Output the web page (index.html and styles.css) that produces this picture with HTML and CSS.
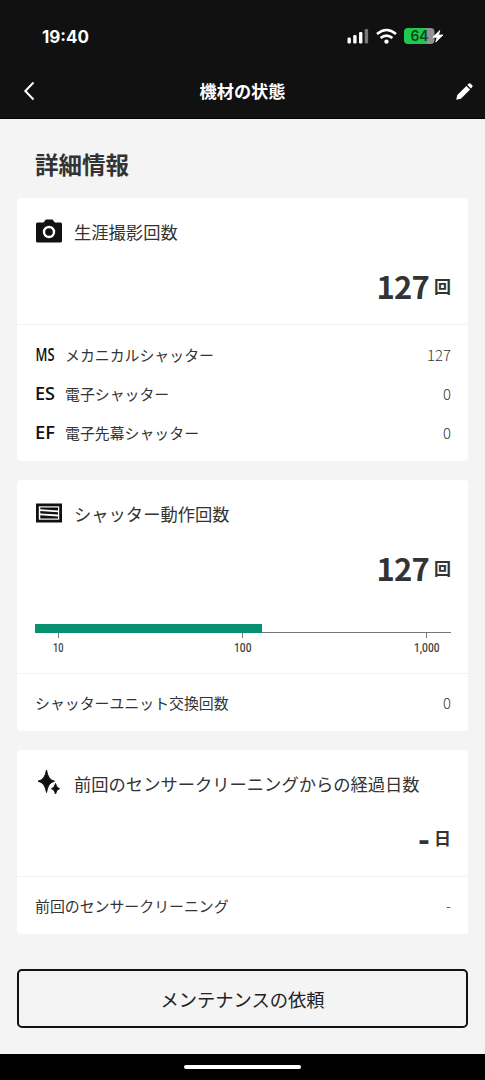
FILE: index.html
```html
<!DOCTYPE html>
<html lang="ja">
<head>
<meta charset="utf-8">
<meta name="viewport" content="width=device-width, initial-scale=1">
<title>機材の状態</title>
<link rel="stylesheet" href="styles.css">
</head>
<body>
<div class="screen">
  <header class="top">
    <div class="status">
      <svg class="clock" width="60" height="30" viewBox="0 0 60 30"><text x="0" y="21.500" textLength="47" lengthAdjust="spacingAndGlyphs">19:40</text></svg>
      <div class="status-icons">
        <svg width="22" height="16" viewBox="0 0 22 16"><g fill="#fff"><rect x="0.500" y="9.500" width="3.400" height="6" rx="1.300"/><rect x="6.200" y="7" width="3.400" height="8.500" rx="1.300"/><rect x="12" y="4" width="3.400" height="11.500" rx="1.300"/></g><rect x="17.700" y="1" width="3.400" height="14.500" rx="1.300" fill="#777"/></svg>
        <svg width="21" height="16" viewBox="0 0 21 16"><g fill="none" stroke="#fff" stroke-width="2.600"><path d="M1 5.900Q10.500-1.900 20 5.900"/><path d="M4.600 10Q10.500 5.200 16.400 10"/></g><circle cx="10.500" cy="13.600" r="2.200" fill="#fff"/></svg>
        <svg class="battery" width="40" height="24" viewBox="0 -4 40 24"><path d="M4 1h18v16H4a4 4 0 0 1-4-4V5a4 4 0 0 1 4-4z" fill="#1fc94c"/><path d="M22 1h4.500a4 4 0 0 1 4 4v8a4 4 0 0 1-4 4H22z" fill="#929093"/><text x="6.500" y="14.300" textLength="18" lengthAdjust="spacingAndGlyphs" class="charge">64</text><path d="M35.800 3.500 28.800 10.300h4.300L31.800 15 39 8h-4.500z" fill="#fff" stroke="#fff" stroke-width=".8" stroke-linejoin="round"/></svg>
      </div>
    </div>
    <div class="nav">
      <svg class="back" width="12" height="20" viewBox="0 0 12 20"><path d="M10.500 1.500 2.300 10 10.500 18.500" fill="none" stroke="#fff" stroke-width="2"/></svg>
      <h1>機材の状態</h1>
      <svg class="edit" width="17" height="17" viewBox="0 0 17 17"><path d="M.2 16.700 1.300 12 10.400 2.900l3.700 3.600-9.200 9.200zM11.300 2 12.900.6q1-.7 1.800.1l1.500 1.600q.8.800 0 1.700L15 5.600z" fill="#fff"/></svg>
    </div>
  </header>
  <main>
    <h2>詳細情報</h2>
    <section class="card shots">
      <div class="summary">
        <h3><svg width="26" height="26" viewBox="0 0 26 26"><path d="M1.500 4.500h6l2.400-3h6.600l2.400 3h5.600A1.500 1.500 0 0 1 26 6v17a1.500 1.500 0 0 1-1.500 1.500h-23A1.500 1.500 0 0 1 0 23V6a1.500 1.500 0 0 1 1.500-1.500z" fill="#111"/><circle cx="13" cy="14" r="5" fill="none" stroke="#fff" stroke-width="2.400"/></svg>生涯撮影回数</h3>
        <p class="total"><b>127</b><span>回</span></p>
      </div>
      <ul class="rows">
        <li><svg class="abbr" width="24" height="30" viewBox="-1 0 24 30"><text x="0.500" y="21" textLength="19" lengthAdjust="spacingAndGlyphs">MS</text></svg><span>メカニカルシャッター</span><em>127</em></li>
        <li><svg class="abbr" width="24" height="30" viewBox="-1 0 24 30"><text x="0" y="21" textLength="20" lengthAdjust="spacingAndGlyphs">ES</text></svg><span>電子シャッター</span><em>0</em></li>
        <li><svg class="abbr" width="24" height="30" viewBox="-1 0 24 30"><text x="0" y="21" textLength="20" lengthAdjust="spacingAndGlyphs">EF</text></svg><span>電子先幕シャッター</span><em>0</em></li>
      </ul>
    </section>
    <section class="card shutter">
      <div class="summary chart">
        <h3><svg width="26" height="26" viewBox="0 0 26 26"><path d="M0 3.500h26v19H0z" fill="#111"/><path d="M2.800 6.300h20.400v13.400H2.800z" fill="#fff"/><path d="M4.300 7.500H22v3L4.300 9.200zM4.300 11 22 12.200v2.400L4.300 13.400zM4.300 15.200 22 16.400v2.200H4.300z" fill="#111"/></svg>シャッター動作回数</h3>
        <p class="total"><b>127</b><span>回</span></p>
        <svg class="scale" width="416" height="36" viewBox="0 0 416 36"><path d="M0 9.500h416M23.500 9v6M207.500 9v6M391.500 9v6" fill="none" stroke="#777" stroke-width="1"/><path d="M0 1h227v9H0z" fill="#07906f"/><text x="18" y="28.500" textLength="10.500" lengthAdjust="spacingAndGlyphs">10</text><text x="199" y="28.500" textLength="17.500" lengthAdjust="spacingAndGlyphs">100</text><text x="379" y="28.500" textLength="25.500" lengthAdjust="spacingAndGlyphs">1,000</text></svg>
      </div>
      <ul class="rows single"><li><span>シャッターユニット交換回数</span><em>0</em></li></ul>
    </section>
    <section class="card">
      <div class="summary">
        <h3><svg width="26" height="26" viewBox="0 0 26 26"><path d="M10.500 0Q11.900 9.800 18.500 11.200Q11.900 12.600 10.500 22.500Q9.100 12.600 2 11.200Q9.100 9.800 10.500 0zM19.500 13.500Q20.300 18 23.500 18.700Q20.300 19.400 19.500 24Q18.700 19.400 15.500 18.700Q18.700 18 19.500 13.500z" fill="#111" stroke="#111" stroke-width="1"/></svg>前回のセンサークリーニングからの経過日数</h3>
        <p class="total"><b class="empty">-</b><span>日</span></p>
      </div>
      <ul class="rows single"><li><span>前回のセンサークリーニング</span><em>-</em></li></ul>
    </section>
    <button type="button">メンテナンスの依頼</button>
  </main>
  <footer><i></i></footer>
</div>
</body>
</html>
```
FILE: styles.css
```css
* { box-sizing: border-box; }
body { margin: 0; font-family: "Noto Sans CJK JP", sans-serif; color: #333; background: #f4f4f4; }
h1, h2, h3, p, ul { margin: 0; padding: 0; }
svg { display: block; flex: none; }
.screen { width: 485px; height: 1080px; display: flex; flex-direction: column; overflow: hidden; }
.top { height: 119px; flex: none; background: #111; color: #fff; border-bottom: 1px solid #000; }
.status { height: 64px; padding: 21px 41px 0 42px; display: flex; justify-content: space-between; }
.clock text { font: 700 17px Inter, sans-serif; fill: #fff; }
.status-icons { display: flex; gap: 7px; padding-top: 7px; }
.battery { margin-top: -5px; }
.charge { font: 600 15px Inter, sans-serif; fill: #0b4b1d; }
.nav { height: 54px; padding: 0 12px 0 23px; display: grid; grid-template-columns: 49px 1fr 60px; align-items: center; }
.nav .edit { justify-self: end; }
.nav h1 { font-size: 17.200px; font-weight: 700; line-height: 26px; text-align: center; }
main { flex: 1; padding: 28px 17px 0; }
h2 { font-size: 23.500px; line-height: 34px; font-weight: 700; padding-left: 18px; margin-bottom: 17px; }
.card { background: #fff; border-radius: 4px; margin-bottom: 19px; }
.shots { height: 263px; }
.shutter { height: 251px; }
.summary { height: 127px; padding: 20px 17px 0 18px; border-bottom: 1px solid #f2f2f2; }
.chart { height: 194px; }
h3 { display: flex; align-items: center; gap: 12px; height: 26px; padding-left: 1px; font-size: 17.300px; font-weight: 400; line-height: 27px; }
.total { display: flex; justify-content: flex-end; align-items: center; gap: 5px; height: 48px; margin-top: 18px; line-height: 48px; }
.total b { font-size: 31px; letter-spacing: -.8px; }
.total .empty { font-weight: 900; }
.total span { font-size: 17px; font-weight: 700; }
.scale { margin-top: 31px; }
.scale text { font: 500 12px Roboto, sans-serif; fill: #444; }
.rows { list-style: none; padding: 10px 17px 8px 18px; }
.rows li { display: flex; align-items: center; height: 39.300px; font-size: 14.900px; line-height: 24px; }
.rows em { margin-left: auto; font-style: normal; font-weight: 300; }
.single { padding-top: 9px; padding-bottom: 8px; }
.single li { height: 39.500px; }
.abbr { margin: 0 7px 0 -1px; }
.abbr text { font: 600 17.500px "Open Sans", sans-serif; fill: #111; }
button { display: block; width: 100%; height: 59px; margin-top: 35px; padding: 1px 0 0; border: 2px solid #111; border-radius: 5px; background: transparent; font: 400 18.300px "Noto Sans CJK JP", sans-serif; color: #222; }
footer { height: 26px; flex: none; background: #000; display: flex; justify-content: center; align-items: center; }
footer i { width: 117px; height: 4px; border-radius: 2px; background: #fff; }
```
